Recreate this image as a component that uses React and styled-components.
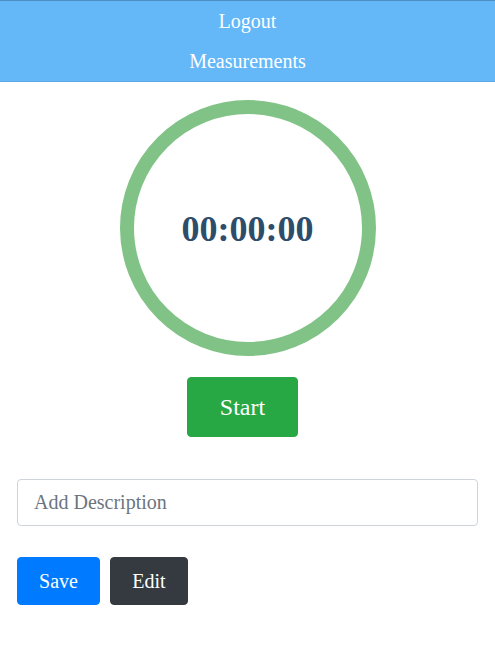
import React from "react";
import styled, { createGlobalStyle } from "styled-components";

const Global = createGlobalStyle`
  html, body { margin: 0; padding: 0; background: #fff; }
  body { font-family: "Liberation Serif", "Times New Roman", serif; }
  * { box-sizing: border-box; }
`;

const Header = styled.nav`
  background: #64b8f7;
  border-top: 1px solid #4b8fc4;
  border-bottom: 1px solid #5aa9e6;
  display: flex;
  flex-direction: column;
`;

const NavItem = styled.a`
  height: 40px;
  display: flex;
  align-items: center;
  justify-content: center;
  color: #fff;
  font-size: 20px;
  text-decoration: none;
`;

const Main = styled.main`
  padding: 18px 17px 0;
  display: flex;
  flex-direction: column;
`;

const TimerWrap = styled.div`
  display: flex;
  flex-direction: column;
  align-items: center;
`;

const Ring = styled.div`
  width: 256px;
  height: 256px;
  border-radius: 50%;
  border: 14px solid #81c386;
  display: flex;
  align-items: center;
  justify-content: center;
`;

const Time = styled.span`
  font-size: 36px;
  font-weight: bold;
  color: #2d4d6a;
  margin-top: 2px;
`;

const Button = styled.button`
  font-family: "Liberation Serif", "Times New Roman", serif;
  color: #fff;
  border: 1px solid ${(p) => p.$bg};
  background: ${(p) => p.$bg};
  border-radius: 4px;
  font-size: ${(p) => p.$fs || 20}px;
  width: ${(p) => p.$w}px;
  height: ${(p) => p.$h}px;
  padding: 0;
  cursor: pointer;
`;

const StartButton = styled(Button)`
  margin-top: 21px;
  margin-right: 10px;
`;

const Input = styled.input`
  margin-top: 42px;
  width: 100%;
  height: 47px;
  border: 1px solid #ced4da;
  border-radius: 4px;
  padding: 0 16px;
  font-family: "Liberation Serif", "Times New Roman", serif;
  font-size: 20px;
  color: #495057;
  &::placeholder { color: #6c757d; }
`;

const Actions = styled.div`
  margin-top: 31px;
  display: flex;
  gap: 10px;
`;

export default function App() {
  return (
    <>
      <Global />
      <Header>
        <NavItem href="#">Logout</NavItem>
        <NavItem href="#">Measurements</NavItem>
      </Header>
      <Main>
        <TimerWrap>
          <Ring>
            <Time>00:00:00</Time>
          </Ring>
          <StartButton $bg="#28a745" $w={111} $h={60} $fs={24}>Start</StartButton>
        </TimerWrap>
        <Input placeholder="Add Description" />
        <Actions>
          <Button $bg="#007bff" $w={83} $h={48}>Save</Button>
          <Button $bg="#343a40" $w={78} $h={48}>Edit</Button>
        </Actions>
      </Main>
    </>
  );
}
